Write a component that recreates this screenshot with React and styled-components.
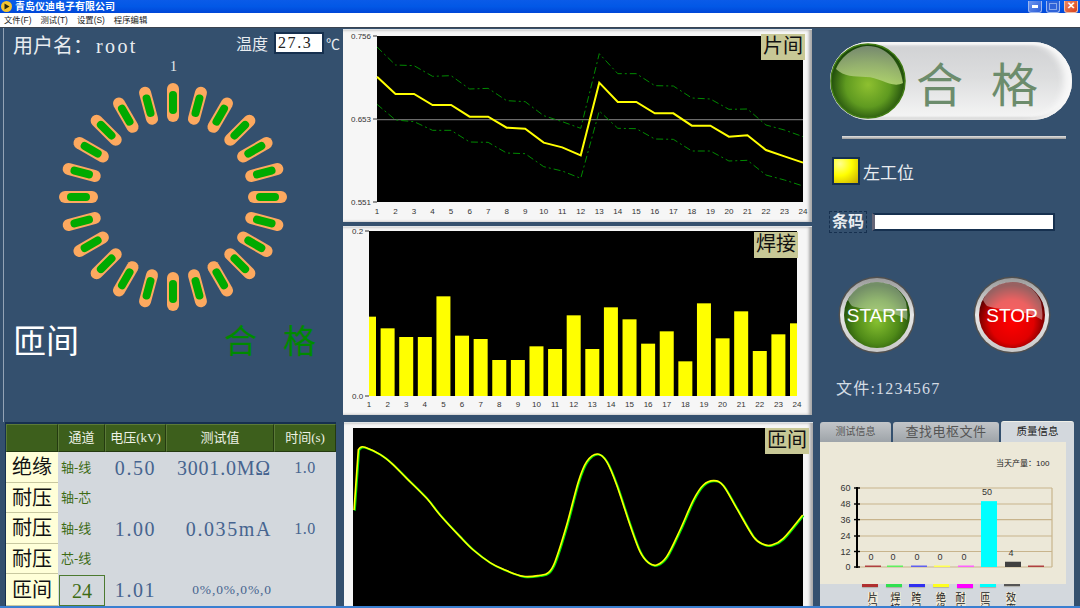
import React from 'react';
import styled, { createGlobalStyle } from 'styled-components';

const SERIF = '"Liberation Serif", "Noto Sans CJK SC", serif';
const SANS = '"Liberation Sans", "Noto Sans CJK SC", sans-serif';

const GlobalStyle = createGlobalStyle`
  html, body { margin: 0; padding: 0; width: 1080px; height: 608px; overflow: hidden; background: #34506e; }
  * { box-sizing: border-box; }
`;

// values read off the reference, in 3x crop coordinates
const MID = [155, 207, 207, 240, 240, 275, 275, 308, 311, 353, 367, 391, 173, 231, 231, 265, 265, 302, 302, 335, 331, 375, 394, 413];
const UPPER = [66, 120, 122, 154, 152, 192, 190, 227, 230, 272, 290, 310, 86, 146, 146, 182, 183, 219, 222, 253, 252, 300, 315, 335];
const LOWER = [238, 285, 290, 316, 316, 351, 352, 384, 386, 425, 438, 460, 258, 310, 311, 342, 343, 378, 378, 408, 406, 450, 465, 483];
const WELD = [290, 325, 351, 351, 229, 347, 357, 420, 420, 379, 387, 286, 387, 262, 298, 371, 334, 424, 250, 355, 274, 393, 343, 310];
const WAVE = [[55, 104], [62, 97], [75, 97], [120, 118], [155, 145], [200, 190], [260, 250], [300, 300], [360, 365], [400, 405], [450, 443], [490, 463], [550, 484], [600, 481], [625, 473], [645, 440], [680, 330], [715, 200], [740, 140], [772, 117], [800, 140], [830, 210], [870, 330], [900, 410], [925, 443], [950, 450], [980, 425], [1020, 345], [1060, 255], [1090, 210], [1122, 197], [1150, 212], [1190, 280], [1240, 365], [1270, 388], [1295, 390], [1330, 370], [1388, 300]];
const QUALITY = [
  { x: 873, v: 0, c: '#b04040' }, { x: 895, v: 0, c: '#60f060' }, { x: 919, v: 0, c: '#6060f0' }, { x: 942, v: 0, c: '#ffff50' },
  { x: 966, v: 0, c: '#ff60ff' }, { x: 989, v: 50, c: '#00ffff' }, { x: 1013, v: 4, c: '#404040' }, { x: 1036, c: '#b04040' },
];
const LEGEND = [
  ['片间', '#b03030', 3, 3], ['焊接', '#30e050', 3, 2], ['跨间', '#3030f0', 3, -1], ['绝缘', '#ffff20', 3, 0],
  ['耐压', '#ff00ff', 4, -4], ['匝间', '#00ffff', 3, -3], ['效率', '#555555', 2, -1],
];

const smooth = pts => {
  let d = `M${pts[0][0]} ${pts[0][1]}`;
  for (let i = 0; i < pts.length - 1; i++) {
    const p0 = pts[Math.max(i - 1, 0)], p1 = pts[i], p2 = pts[i + 1], p3 = pts[Math.min(i + 2, pts.length - 1)];
    d += `C${p1[0] + (p2[0] - p0[0]) / 6} ${p1[1] + (p2[1] - p0[1]) / 6} ${p2[0] - (p3[0] - p1[0]) / 6} ${p2[1] - (p3[1] - p1[1]) / 6} ${p2[0]} ${p2[1]}`;
  }
  return d;
};

const Window = styled.div`
  width: 1080px;
  height: 608px;
  display: flex;
  flex-direction: column;
  background: #34506e;
  overflow: hidden;
  border-bottom: 2px solid #3a7fd0;
`;
const TitleBar = styled.div`
  height: 13px;
  flex: none;
  display: flex;
  align-items: center;
  padding: 0 2px 0 1px;
  gap: 3px;
  background: linear-gradient(#0a5be8, #0258e6 50%, #0046d8);
`;
const AppTitle = styled.span`
  flex: 1;
  font: bold 10px/13px ${SANS};
  color: #fff;
`;
const WinButton = styled.div`
  width: 14px;
  height: 12px;
  margin-left: 1px;
  border: 1px solid ${p => (p.$close ? '#f0c0a8' : '#9db8f0')};
  border-top: none;
  border-radius: 0 0 3px 3px;
  background: ${p => (p.$close ? 'linear-gradient(135deg, #ee8a60, #d8401c)' : p.$off ? '#2f62d8' : 'linear-gradient(135deg, #6f96ee, #2a5cd8)')};
  display: flex;
  align-items: center;
  justify-content: center;
  color: #fff;
  font: bold 10px/1 ${SANS};
`;
const MenuBar = styled.div`
  height: 15px;
  flex: none;
  display: flex;
  gap: 9px;
  padding-left: 4px;
  align-items: center;
  background: #fff;
  border-bottom: 1px solid #3b4450;
  font: 8.4px/14px ${SANS};
  color: #222;
`;
const Body = styled.div`
  flex: 1;
  min-height: 0;
  display: grid;
  grid-template-columns: 343px 470px 267px;
  grid-template-rows: 578px;
`;

const LeftColumn = styled.div`
  display: flex;
  flex-direction: column;
`;
const LeftTop = styled.div`
  height: 394px;
  flex: none;
  margin-left: 3px;
  border-left: 1px solid #93a3b5;
  display: flex;
  flex-direction: column;
  align-items: flex-start;
  color: #e8ecf0;
  font-family: ${SERIF};
`;
const UserRow = styled.div`
  width: 100%;
  height: 30px;
  display: flex;
  align-items: center;
  padding-left: 9px;
`;
const UserName = styled.div`
  flex: 1;
  font-size: 20px;
  margin-top: 3px;
  white-space: nowrap;
`;
const UserValue = styled.span`
  margin-left: 3px;
  letter-spacing: 2.4px;
`;
const TempLabel = styled.span`
  font-size: 16px;
  margin-right: 6px;
`;
const TempInput = styled.div`
  width: 50px;
  height: 22px;
  background: #fff;
  border: 2px solid #16304f;
  color: #222;
  font: 16px/18px ${SERIF};
  letter-spacing: 1.6px;
  padding-left: 2px;
`;
const Unit = styled.span`
  width: 19px;
  font-size: 14px;
  padding-left: 2px;
  white-space: nowrap;
`;
const SlotNumber = styled.div`
  align-self: center;
  height: 19px;
  width: 100%;
  text-align: center;
  font-size: 14px;
  line-height: 17px;
`;
const RotorBox = styled.div`
  width: 100%;
  display: flex;
  justify-content: center;
  padding-right: 1px;
`;
const ResultRow = styled.div`
  width: 100%;
  display: flex;
  padding: 4px 0 0 9px;
  align-items: center;
`;
const ModeText = styled.div`
  width: 211px;
  font-size: 33px;
  line-height: 42px;
  color: #fff;
`;
const VerdictText = styled.div`
  font-size: 33px;
  line-height: 42px;
  letter-spacing: 26px;
  color: #008a00;
  white-space: nowrap;
`;
const ResultTable = styled.div`
  margin-left: 5px;
  width: 331px;
  flex: 1;
  min-height: 0;
  display: grid;
  grid-template-columns: 52px 47px 61px 108px 62px;
  grid-template-rows: 28px 31px 30px 31px 30px minmax(0, 1fr);
  background: #d3d8dd;
  border-top: 2px solid #16304f;
  border-left: 1px solid #16304f;
`;
const Head = styled.div`
  background: #3d5f1c;
  border: 1px solid;
  border-color: #5b7a38 #243a10 #243a10 #5b7a38;
  color: #eef2e6;
  font: 13px/26px ${SERIF};
  text-align: center;
  white-space: nowrap;
`;
const RowName = styled.div`
  display: flex;
  align-items: center;
  justify-content: center;
  background: #ffffd8;
  border-bottom: 1px solid #c8c8a0;
  color: #111;
  font: 20px/1 ${SERIF};
`;
const Channel = styled.div`
  align-self: center;
  color: #3d6b14;
  font: 13px/20px ${SERIF};
  padding-left: 3px;
  white-space: nowrap;
`;
const CountBox = styled.div`
  display: flex;
  align-items: center;
  justify-content: center;
  margin: 1px 0 0 1px;
  border: 1px solid #4c7a30;
  color: #3d6b14;
  font: 20px/1 ${SERIF};
`;
const Reading = styled.div`
  align-self: center;
  color: #46648f;
  font: ${p => p.$size || 20}px/24px ${SERIF};
  letter-spacing: ${p => p.$sp ?? 1.6}px;
  text-align: ${p => p.$align || 'center'};
  padding-right: ${p => p.$pad || 0}px;
  white-space: nowrap;
`;

const CenterColumn = styled.div`
  display: flex;
  flex-direction: column;
  padding-top: 1px;
`;
const ChartPanel = styled.div`
  position: relative;
  width: 469px;
  height: ${p => p.$h}px;
  margin: ${p => p.$top}px 0 0 ${p => p.$left || 0}px;
  flex: none;
  background: #f6f6f6;
  border-top: 1px solid #dfe3e6;
  box-shadow: inset -3px 0 3px #a8a8a8;
  svg { display: block; position: relative; top: -1px; }
`;
const Badge = styled.div`
  position: absolute;
  top: ${p => p.$top}px;
  left: ${p => p.$left}px;
  width: 44px;
  height: 26px;
  background: #c8c896;
  color: #111;
  font: 20px/25px ${SERIF};
  text-align: center;
  white-space: nowrap;
`;

const RightColumn = styled.div`
  display: flex;
  flex-direction: column;
  padding: 14px 0 0 17px;
  color: #e8ecf0;
  font-family: ${SERIF};
`;
const Pill = styled.div`
  width: 242px;
  height: 78px;
  flex: none;
  border-radius: 39px;
  display: flex;
  align-items: center;
  background: linear-gradient(#d0d1d3, #dcddde 45%, #f6f6f6);
  box-shadow: inset 0 3px 2px #f6f6f6, inset -8px 0 6px #f8f8f8, inset 0 -3px 2px #d0d0d0;
`;
const PillText = styled.div`
  margin-left: 10px;
  font-size: 47px;
  letter-spacing: 28px;
  color: #6c8c6c;
  white-space: nowrap;
`;
const Divider = styled.div`
  width: 224px;
  height: 3px;
  margin: 16px 0 0 12px;
  background: linear-gradient(#e4e4e4, #9a9a9a);
`;
const StationRow = styled.div`
  display: flex;
  align-items: center;
  margin: 18px 0 0 2px;
  gap: 3px;
  font-size: 17px;
`;
const Lamp = styled.div`
  width: 28px;
  height: 28px;
  border: 2px solid #16304f;
  background: radial-gradient(circle at 25% 20%, #ffff90, #ffff00 45%, #c8a800 100%);
`;
const BarcodeRow = styled.div`
  display: flex;
  align-items: center;
  margin: 26px 0 0 -1px;
  gap: 5px;
`;
const BarcodeLabel = styled.div`
  width: 38px;
  height: 22px;
  border: 1px dashed #16304f;
  font-size: 16px;
  font-weight: bold;
  line-height: 20px;
  text-align: center;
`;
const BarcodeInput = styled.div`
  width: 183px;
  height: 18px;
  background: #fff;
  border: 2px solid #16304f;
  border-left: 3px solid #667;
`;
const ButtonRow = styled.div`
  display: flex;
  gap: 57px;
  margin: 43px 0 0 8px;
`;
const GlassButton = styled.div`
  position: relative;
  width: 78px;
  height: 78px;
  svg { display: block; }
`;
const ButtonLabel = styled.span`
  position: absolute;
  inset: 0;
  display: flex;
  align-items: center;
  justify-content: center;
  font: 19px/1 ${SANS};
  color: #fff;
`;
const FileName = styled.div`
  margin: 25px 0 0 6px;
  font-size: 16px;
  line-height: 20px;
  letter-spacing: 1.2px;
  color: #d4dce4;
`;
const TabBox = styled.div`
  margin: 22px 0 0 -10px;
  width: 254px;
  flex: 1;
  min-height: 0;
  display: flex;
  flex-direction: column;
  background: #d3d8dd;
  overflow: hidden;
`;
const TabRow = styled.div`
  height: 21px;
  flex: none;
  display: flex;
  gap: 2px;
  background: #34506e;
`;
const Tab = styled.div`
  width: ${p => p.$w}px;
  margin-top: ${p => (p.$active ? 0 : 1)}px;
  border-radius: 3px 3px 0 0;
  background: ${p => (p.$active ? '#d3d8dd' : 'linear-gradient(#c3c6c9, #9ea4a9)')};
  border-top: ${p => (p.$active ? '1px solid #f0f0e8' : 'none')};
  color: ${p => (p.$active ? '#222' : '#555')};
  font: ${p => p.$size}px/19px ${SERIF};
  letter-spacing: ${p => p.$sp || 0}px;
  text-align: center;
  white-space: nowrap;
`;
const QualityChart = styled.div`
  width: 246px;
  height: 142px;
  flex: none;
  background: #ece8d8;
  svg { display: block; }
`;
const Legend = styled.div`
  display: flex;
  padding-left: 38px;
`;
const LegendItem = styled.div`
  width: 23.7px;
  display: flex;
  flex-direction: column;
  align-items: center;
`;
const Swatch = styled.div`
  width: 16px;
  height: ${p => p.$h}px;
  background: ${p => p.$c};
  box-shadow: 0 1px 1px #b0b0a8;
`;
const LegendLabel = styled.div`
  margin-top: ${p => 8 - p.$h}px;
  width: 10px;
  margin-left: ${p => p.$dx * 2}px;
  font: 10px/11px ${SERIF};
  color: #222;
  background: #ece8d8;
  word-break: break-all;
`;

const Rotor = () => (
  <svg width="240" height="240" viewBox="-120 -120 240 240">
    {Array.from({ length: 24 }, (_, i) => (
      <g key={i} transform={`rotate(${i * 15})`}>
        <rect x="-6" y="-114" width="12" height="39" rx="6" fill="#fda95f" />
        <rect x="-4" y="-106" width="8" height="23" rx="4" fill="#00aa00" />
      </g>
    ))}
  </svg>
);

const ResultOrb = () => (
  <svg width="76" height="76" viewBox="0 0 76 76" style={{ flex: 'none' }}>
    <defs>
      <radialGradient id="orbFill" cx="0.5" cy="0.55" r="0.55">
        <stop offset="0" stopColor="#8ec030" />
        <stop offset="0.55" stopColor="#5f9a20" />
        <stop offset="1" stopColor="#123c08" />
      </radialGradient>
      <linearGradient id="orbGloss" x1="0" y1="1" x2="0" y2="0">
        <stop offset="0" stopColor="#b8d878" stopOpacity="0.85" />
        <stop offset="1" stopColor="#80907a" stopOpacity="0.9" />
      </linearGradient>
    </defs>
    <circle cx="38" cy="38" r="37" fill="url(#orbFill)" stroke="#3f7a12" strokeWidth="1.5" />
    <path d="M6 26C14 8 30 3 38 3C56 3 70 18 73 40C62 46 50 34 36 34C24 33 14 34 6 26Z" fill="url(#orbGloss)" />
  </svg>
);

const PressButton = ({ id, label, core, mid, edge, gloss }) => (
  <GlassButton>
    <svg width="78" height="78" viewBox="0 0 78 78">
      <defs>
        <radialGradient id={id} cx="0.5" cy="0.6" r="0.55">
          <stop offset="0" stopColor={core} />
          <stop offset="0.6" stopColor={mid} />
          <stop offset="1" stopColor={edge} />
        </radialGradient>
        <linearGradient id={`${id}Ring`} x1="0" y1="0" x2="0" y2="1">
          <stop offset="0" stopColor="#9a9a9a" />
          <stop offset="0.5" stopColor="#e6e6e6" />
          <stop offset="1" stopColor="#c8c8c8" />
        </linearGradient>
      </defs>
      <circle cx="39" cy="39" r="38.5" fill="#505050" />
      <circle cx="39" cy="39" r="37" fill={`url(#${id}Ring)`} />
      <circle cx="39" cy="39" r="33" fill={`url(#${id})`} />
      <path d="M10 24C16 11 28 6 39 6C52 6 63 13 68 26C69 34 70 38 69 44C56 34 24 34 14 30C12 28 11 26 10 24Z" fill={gloss} opacity="0.38" />
    </svg>
    <ButtonLabel>{label}</ButtonLabel>
  </GlassButton>
);

const AxisText = ({ x, y, anchor = 'middle', children, size = 8 }) => (
  <text x={x} y={y} textAnchor={anchor} fontSize={size} fontFamily={SANS} fill="#333">{children}</text>
);

const TrendChart = () => {
  const px = i => 34 + (i * 426) / 23;
  const py = z => z / 3 - 4;
  const line = arr => arr.map((z, i) => `${px(i)},${py(z)}`).join(' ');
  return (
    <svg width="469" height="193">
      <rect x="34" y="7" width="426" height="166" fill="#000" />
      <line x1="34" x2="460" y1="90.7" y2="90.7" stroke="#6a6a6a" strokeWidth="1.2" />
      <polyline points={line(UPPER)} fill="none" stroke="#008a00" strokeWidth="1" strokeDasharray="7 3 2 3" />
      <polyline points={line(LOWER)} fill="none" stroke="#008a00" strokeWidth="1" strokeDasharray="7 3 2 3" />
      <polyline points={line(MID)} fill="none" stroke="#ffff00" strokeWidth="2" />
      {[['0.756', 10], ['0.653', 93], ['0.551', 176]].map(([t, y]) => (
        <g key={t}>
          <AxisText x="8" y={y} anchor="start">{t}</AxisText>
          <line x1="30" x2="34" y1={y - 3} y2={y - 3} stroke="#333" />
        </g>
      ))}
      {MID.map((_, i) => <AxisText key={i} x={px(i)} y="185">{i + 1}</AxisText>)}
    </svg>
  );
};

const WeldChart = () => {
  const px = i => 26 + (i * 428) / 23;
  return (
    <svg width="469" height="189">
      <rect x="26" y="5" width="428" height="165" fill="#000" />
      <clipPath id="weldClip"><rect x="26" y="5" width="428" height="165" /></clipPath>
      <g clipPath="url(#weldClip)">
        {WELD.map((z, i) => (
          <rect key={i} x={px(i) - 7} y={z / 3 - 6} width="14" height={170 - (z / 3 - 6)} fill="#ffff00" />
        ))}
      </g>
      <AxisText x="9" y="8" anchor="start">0.2</AxisText>
      <AxisText x="9" y="173" anchor="start">0.0</AxisText>
      <line x1="22" x2="26" y1="5" y2="5" stroke="#333" />
      <line x1="22" x2="26" y1="170" y2="170" stroke="#333" />
      {WELD.map((_, i) => <AxisText key={i} x={px(i)} y="181">{i + 1}</AxisText>)}
    </svg>
  );
};

const WaveChart = () => {
  const pts = WAVE.map(([x, y]) => [x / 3 - 4, y / 3 - 7]);
  const d = `M${42 / 3 - 4} ${285 / 3 - 7}L${smooth(pts).slice(1)}`;
  return (
    <svg width="469" height="186">
      <rect x="9" y="6" width="450" height="180" fill="#000" />
      <path d={d} fill="none" stroke="#00e000" strokeWidth="2" transform="translate(0.8 0.6)" />
      <path d={d} fill="none" stroke="#ffff00" strokeWidth="1.6" />
    </svg>
  );
};

const QualityPlot = () => {
  const ox = 820, oy = 442;
  const ticks = [[60, 488], [48, 504], [36, 519.6], [24, 536], [12, 551.5], [0, 567]];
  return (
    <svg width="246" height="142">
      <text x={996 - ox} y={466 - oy} fontSize="8" fontFamily={SANS} fill="#222">当天产量{'\uFF1A'}100</text>
      {ticks.map(([t, y]) => (
        <g key={t}>
          <line x1={858 - ox} x2={1052 - ox} y1={y - oy} y2={y - oy} stroke="#c8b48c" strokeWidth="1.2" />
          <line x1={854 - ox} x2={860 - ox} y1={y - oy} y2={y - oy} stroke="#000" strokeWidth="1.4" />
          <text x={850.5 - ox} y={y - oy + 3} textAnchor="end" fontSize="9" fontFamily={SANS} fill="#333">{t}</text>
        </g>
      ))}
      <line x1={1052 - ox} x2={1052 - ox} y1={488 - oy} y2={567 - oy} stroke="#c8b48c" strokeWidth="1.2" />
      <line x1={857 - ox} x2={857 - ox} y1={487 - oy} y2={568 - oy} stroke="#000" strokeWidth="2" />
      {QUALITY.map(({ x, v, c }) => {
        const h = Math.max((v || 0) * 1.317, 1.5);
        return (
          <g key={x}>
            <rect x={x - 8 - ox} y={567 - oy - h} width="16" height={h} fill={c} />
            {v !== undefined && (
              <text x={x - ox - 2} y={567 - oy - h - 6} textAnchor="middle" fontSize="9" fontFamily={SANS} fill="#333">{v}</text>
            )}
          </g>
        );
      })}
    </svg>
  );
};

const App = () => (
  <>
    <GlobalStyle />
    <Window>
      <TitleBar>
        <svg width="11" height="11" viewBox="0 0 11 11">
          <circle cx="5.5" cy="5.5" r="5.5" fill="#f4c430" />
          <path d="M3.5 2.5L8.5 5.5L3.5 8.5Z" fill="#2a2a10" />
        </svg>
        <AppTitle>青岛仪迪电子有限公司</AppTitle>
        <WinButton><svg width="6" height="3"><rect width="6" height="3" fill="#fff" /></svg></WinButton>
        <WinButton $off><svg width="8" height="7"><rect x=".5" y=".5" width="7" height="6" fill="none" stroke="#88a8ea" /></svg></WinButton>
        <WinButton $close>✕</WinButton>
      </TitleBar>
      <MenuBar>
        <span>文件(F)</span>
        <span>测试(T)</span>
        <span>设置(S)</span>
        <span>程序编辑</span>
      </MenuBar>
      <Body>
        <LeftColumn>
          <LeftTop>
            <UserRow>
              <UserName>用户名{'\uFF1A'}<UserValue>root</UserValue></UserName>
              <TempLabel>温度</TempLabel>
              <TempInput>27.3</TempInput>
              <Unit>℃</Unit>
            </UserRow>
            <SlotNumber>1</SlotNumber>
            <RotorBox><Rotor /></RotorBox>
            <ResultRow>
              <ModeText>匝间</ModeText>
              <VerdictText>合格</VerdictText>
            </ResultRow>
          </LeftTop>
          <ResultTable>
            <Head />
            <Head>通道</Head>
            <Head>电压(kV)</Head>
            <Head>测试值</Head>
            <Head>时间(s)</Head>

            <RowName>绝缘</RowName>
            <Channel>轴-线</Channel>
            <Reading>0.50</Reading>
            <Reading $sp={0.8} $align="right" $pad={3}>3001.0MΩ</Reading>
            <Reading $size={16} $sp={0.5}>1.0</Reading>

            <RowName>耐压</RowName>
            <Channel>轴-芯</Channel>
            <Reading />
            <Reading />
            <Reading />

            <RowName>耐压</RowName>
            <Channel>轴-线</Channel>
            <Reading>1.00</Reading>
            <Reading $align="right" $pad={2}>0.035mA</Reading>
            <Reading $size={16} $sp={0.5}>1.0</Reading>

            <RowName>耐压</RowName>
            <Channel>芯-线</Channel>
            <Reading />
            <Reading />
            <Reading />

            <RowName>匝间</RowName>
            <CountBox>24</CountBox>
            <Reading>1.01</Reading>
            <Reading $size={13.5} $sp={0.9} $align="right" $pad={2}>0%,0%,0%,0</Reading>
            <Reading />
          </ResultTable>
        </LeftColumn>

        <CenterColumn>
          <ChartPanel $h={193} $top={0}>
            <TrendChart />
            <Badge $top={4} $left={418}>片间</Badge>
          </ChartPanel>
          <ChartPanel $h={189} $top={4}>
            <WeldChart />
            <Badge $top={5} $left={411}>焊接</Badge>
          </ChartPanel>
          <ChartPanel $h={186} $top={7} $left={1}>
            <WaveChart />
            <Badge $top={5} $left={421}>匝间</Badge>
          </ChartPanel>
        </CenterColumn>

        <RightColumn>
          <Pill>
            <ResultOrb />
            <PillText>合格</PillText>
          </Pill>
          <Divider />
          <StationRow>
            <Lamp />
            <span>左工位</span>
          </StationRow>
          <BarcodeRow>
            <BarcodeLabel>条码</BarcodeLabel>
            <BarcodeInput />
          </BarcodeRow>
          <ButtonRow>
            <PressButton id="startBtn" label="START" core="#86c030" mid="#4f8a18" edge="#1e4a0a" gloss="#ffffff" />
            <PressButton id="stopBtn" label="STOP" core="#ff0000" mid="#e00000" edge="#5a0000" gloss="#ffffff" />
          </ButtonRow>
          <FileName>文件:1234567</FileName>
          <TabBox>
            <TabRow>
              <Tab $w={71} $size={10}>测试信息</Tab>
              <Tab $w={106} $size={13} $sp={0.5}>查找电枢文件</Tab>
              <Tab $w={73} $size={10.5} $active>质量信息</Tab>
            </TabRow>
            <QualityChart><QualityPlot /></QualityChart>
            <Legend>
              {LEGEND.map(([name, color, h, dx]) => (
                <LegendItem key={name}>
                  <Swatch $c={color} $h={h} />
                  <LegendLabel $h={h} $dx={dx}>{name}</LegendLabel>
                </LegendItem>
              ))}
            </Legend>
          </TabBox>
        </RightColumn>
      </Body>
    </Window>
  </>
);

export default App;
